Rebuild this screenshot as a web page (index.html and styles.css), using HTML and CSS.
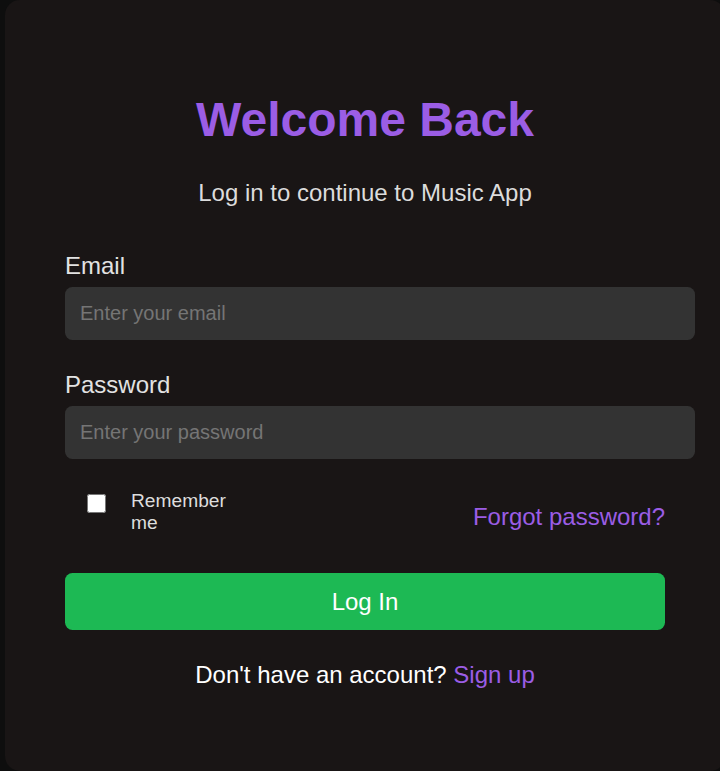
FILE: index.html
```html
<!DOCTYPE html>
<html lang="en">
<head>
<meta charset="utf-8">
<title>Login - Music App</title>
<link rel="stylesheet" href="styles.css">
</head>
<body>
<div class="card">
  <h1 class="title">Welcome Back</h1>
  <p class="subtitle">Log in to continue to Music App</p>
  <form class="form">
    <div class="group">
      <label class="label" for="email">Email</label>
      <input class="field" id="email" type="email" placeholder="Enter your email">
    </div>
    <div class="group">
      <label class="label" for="password">Password</label>
      <input class="field" id="password" type="password" placeholder="Enter your password">
    </div>
    <div class="options">
      <label class="remember">
        <input class="check" type="checkbox">
        <span class="remember-text">Remember me</span>
      </label>
      <a class="forgot" href="#">Forgot password?</a>
    </div>
    <button class="btn" type="button">Log In</button>
  </form>
  <p class="signup">Don't have an account? <a class="signup-link" href="#">Sign up</a></p>
</div>
</body>
</html>
```

FILE: styles.css
```css
html, body {
  margin: 0;
  padding: 0;
}

body {
  background: #0e0e0e;
  font-family: "Liberation Sans", Arial, sans-serif;
  color: #e0e0e0;
  overflow: hidden;
}

.card {
  margin-left: 5px;
  width: 720px;
  height: 771px;
  box-sizing: border-box;
  padding: 60px;
  background: #191515;
  border-radius: 15px;
}

.title {
  margin: 32px 0 32px;
  font-size: 48px;
  line-height: 55px;
  font-weight: 700;
  color: #9b5de5;
  text-align: center;
}

.subtitle {
  margin: 0 0 45px;
  font-size: 24px;
  line-height: 27.6px;
  color: #dcdcdc;
  text-align: center;
}

.form {
  margin: 0;
}

.group {
  margin-bottom: 31px;
}

.label {
  display: block;
  margin-bottom: 7.5px;
  font-size: 24px;
  line-height: 27.6px;
  color: #e2e2e2;
}

.field {
  display: block;
  width: 100%;
  margin: 0;
  padding: 15px;
  border: none;
  border-radius: 7.5px;
  background: #333333;
  color: #eeeeee;
  font-family: "Liberation Sans", Arial, sans-serif;
  font-size: 20px;
  line-height: 23px;
  outline: none;
}

.field::placeholder {
  color: #757575;
}

.options {
  display: flex;
  align-items: flex-start;
  margin-bottom: 39px;
}

.remember {
  display: flex;
  align-items: flex-start;
}

.check {
  width: 19px;
  height: 19px;
  margin: 4.5px 0 0 22px;
  flex: none;
}

.remember-text {
  width: 105px;
  margin-left: 25px;
  font-size: 19.2px;
  line-height: 22px;
  color: #dddddd;
}

.forgot {
  margin-left: auto;
  margin-top: 13px;
  font-size: 24px;
  line-height: 27.6px;
  color: #9b5de5;
  text-decoration: none;
}

.btn {
  display: block;
  width: 100%;
  padding: 15px 0;
  border: none;
  border-radius: 7.5px;
  background: #1db954;
  color: #ffffff;
  font-family: "Liberation Sans", Arial, sans-serif;
  font-size: 24px;
  line-height: 27.6px;
  cursor: pointer;
}

.signup {
  margin: 31px 0 0;
  font-size: 24px;
  line-height: 27.6px;
  color: #ffffff;
  text-align: center;
}

.signup-link {
  color: #9b5de5;
  text-decoration: none;
}
```
